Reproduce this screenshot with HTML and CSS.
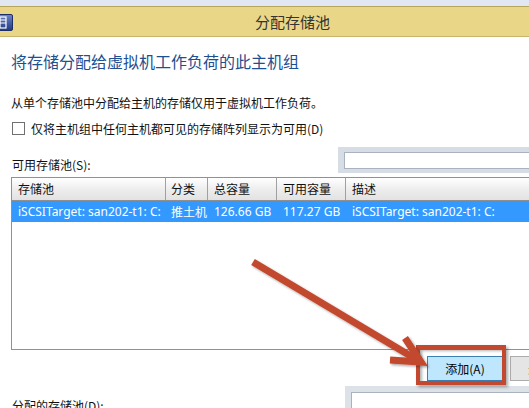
FILE: index.html
```html
<!DOCTYPE html>
<html lang="zh-CN">
<head>
<meta charset="utf-8">
<title>分配存储池</title>
<link rel="stylesheet" href="styles.css">
</head>
<body>
<div class="page">
  <div class="topstrip"></div>
  <div class="titlebar">
    <svg class="appicon" width="20" height="17" viewBox="0 0 20 17">
      <defs>
        <linearGradient id="ig" x1="0" y1="0" x2="0" y2="1">
          <stop offset="0" stop-color="#6d86c8"/>
          <stop offset="1" stop-color="#22397e"/>
        </linearGradient>
      </defs>
      <rect x="0.5" y="0.5" width="19" height="16" rx="1.5" fill="url(#ig)" stroke="#1c2f6a"/>
      <rect x="7" y="3" width="6" height="11" fill="none" stroke="#fff" stroke-width="1.2"/>
      <line x1="7" y1="6" x2="13" y2="6" stroke="#fff" stroke-width="1"/>
      <line x1="7" y1="9" x2="13" y2="9" stroke="#fff" stroke-width="1"/>
    </svg>
    <span class="title">分配存储池</span>
  </div>

  <div class="content">
    <h1 class="heading">将存储分配给虚拟机工作负荷的此主机组</h1>
    <p class="desc">从单个存储池中分配给主机的存储仅用于虚拟机工作负荷。</p>
    <label class="check"><span class="box"></span><span>仅将主机组中任何主机都可见的存储阵列显示为可用(D)</span></label>

    <div class="listhead">
      <span class="lbl">可用存储池(S):</span>
      <div class="searchframe"><div class="search"></div></div>
    </div>

    <div class="table">
      <div class="row head">
        <div class="c c1">存储池</div>
        <div class="c c2">分类</div>
        <div class="c c3">总容量</div>
        <div class="c c4">可用容量</div>
        <div class="c c5">描述</div>
      </div>
      <div class="row sel">
        <div class="c c1">iSCSITarget: san202-t1: C:</div>
        <div class="c c2">推土机</div>
        <div class="c c3">126.66 GB</div>
        <div class="c c4">117.27 GB</div>
        <div class="c c5">iSCSITarget: san202-t1: C:</div>
      </div>
    </div>

    <div class="buttons">
      <div class="btnwrap">
        <button class="btn primary">添加(A)</button>
        <div class="highlight"></div>
      </div>
      <button class="btn">删除(R)</button>
    </div>

    <div class="listhead2">
      <span class="lbl">分配的存储池(D):</span>
      <div class="frame2"><div class="search2"></div></div>
    </div>
  </div>

  <svg class="arrow" width="529" height="408" viewBox="0 0 529 408">
    <defs>
      <filter id="sh" x="-10%" y="-10%" width="130%" height="130%">
        <feDropShadow dx="1.5" dy="1.5" stdDeviation="1" flood-color="#000" flood-opacity="0.35"/>
      </filter>
    </defs>
    <g stroke="#c2482f" stroke-width="7" fill="none" filter="url(#sh)">
      <line x1="253" y1="262" x2="419" y2="361"/>
      <polyline points="405,338 421,362 390,360" stroke-linejoin="miter"/>
    </g>
  </svg>
</div>
</body>
</html>
```

FILE: styles.css
```css
html, body {
  margin: 0;
  padding: 0;
  background: #fff;
  overflow: hidden;
}
body {
  width: 529px;
  height: 408px;
  font-family: "Noto Sans", "Noto Sans CJK SC", sans-serif;
  font-size: 12px;
  color: #1e1e1e;
}
.page {
  position: relative;
  width: 529px;
  height: 408px;
  overflow: hidden;
}
.topstrip {
  height: 6px;
  background: #e2e8f1;
}
.titlebar {
  height: 29px;
  background: #e9d687;
  border-top: 1px solid #b6a45c;
  border-bottom: 1px solid #c8b56d;
  display: flex;
  align-items: center;
  position: relative;
}
.appicon {
  margin-left: -7px;
  margin-top: 1px;
}
.title {
  position: absolute;
  left: 0;
  right: 0;
  text-align: center;
  padding-left: 56px;
  font-family: "Noto Sans CJK SC", sans-serif;
  font-size: 15px;
  color: #333;
}
.content {
  width: 600px;
  padding-left: 11px;
}
.heading {
  margin: 0;
  padding-top: 13px;
  height: 23px;
  line-height: 23px;
  font-family: "Noto Sans CJK SC", sans-serif;
  font-weight: normal;
  font-size: 16px;
  color: #1d4f91;
}
.desc {
  margin: 0;
  padding-top: 21px;
  height: 17px;
  line-height: 17px;
  font-family: "Noto Sans CJK SC", sans-serif;
  font-size: 12px;
  color: #111;
}
.check {
  display: flex;
  align-items: center;
  margin-top: 9px;
  height: 17px;
  line-height: 17px;
  font-family: "Noto Sans CJK SC", sans-serif;
  font-size: 12px;
  color: #111;
}
.box {
  width: 11px;
  height: 11px;
  border: 1px solid #707070;
  background: #fff;
  margin-left: 1px;
  margin-right: 6px;
}
.listhead {
  display: grid;
  grid-template-columns: 327px 260px;
  margin-top: 10px;
  height: 26px;
}
.lbl {
  align-self: end;
  font-family: "Noto Sans CJK SC", sans-serif;
  font-size: 12px;
  line-height: 17px;
  padding-left: 1px;
  color: #111;
}
.searchframe {
  height: 26px;
  background: #d7dde5;
  box-sizing: border-box;
  padding: 5px 0 0 6px;
}
.search {
  height: 15px;
  background: #fff;
  border: 1px solid #a9b2be;
}
.table {
  width: 560px;
  height: 173px;
  border: 1px solid #7a96b5;
  border-right: none;
  box-sizing: border-box;
  margin-top: 4px;
}
.row {
  display: flex;
  height: 21px;
  align-items: center;
}
.row.head {
  height: 22px;
  background: linear-gradient(#ffffff, #eeeeee 50%, #e2e2e2);
  border-bottom: 1px solid #8f8f8f;
}
.row.head .c {
  border-right: 1px solid #a0a0a0;
  height: 22px;
  line-height: 22px;
  font-family: "Noto Sans CJK SC", sans-serif;
  color: #111;
}
.row.sel {
  background: #3399ff;
  color: #fff;
}
.c {
  box-sizing: border-box;
  padding-left: 6px;
  white-space: nowrap;
  overflow: hidden;
  font-size: 12px;
  font-family: "Noto Sans", "Noto Sans CJK SC", sans-serif;
}
.row.sel .c2 { font-family: "Noto Sans CJK SC", sans-serif; }
.c1 { width: 154px; }
.c2 { width: 42px; padding-left: 5px; }
.c3 { width: 69px; }
.c4 { width: 69px; }
.c5 { flex: 1; border-right: none !important; }
.buttons {
  display: flex;
  gap: 7px;
  margin-top: 6px;
  padding-left: 416px;
}
.btnwrap {
  position: relative;
}
.btn {
  width: 76px;
  height: 25px;
  box-sizing: border-box;
  border: 1px solid #adadad;
  background: #e5e5e5;
  font-family: "Noto Sans CJK SC", sans-serif;
  font-size: 12px;
  color: #000;
  padding: 0;
}
.btn.primary {
  background: #bee6fd;
  border-color: #3c7fb1;
}
.highlight {
  position: absolute;
  left: -11px;
  top: -11px;
  width: 90px;
  height: 40px;
  box-sizing: border-box;
  border: 4px solid #c2482f;
  box-shadow: 2px 2px 3px rgba(0,0,0,0.35), inset 2px 2px 3px rgba(0,0,0,0.3);
}
.listhead2 {
  display: grid;
  grid-template-columns: 334px 260px;
  margin-top: 5px;
  height: 40px;
}
.listhead2 .lbl {
  align-self: start;
  padding-top: 11px;
}
.frame2 {
  background: #dde2e8;
  padding: 6px 0 0 6px;
  height: 40px;
}
.search2 {
  height: 40px;
  background: #fff;
  border: 1px solid #a9b2be;
}
.arrow {
  position: absolute;
  left: 0;
  top: 0;
  pointer-events: none;
}
```
